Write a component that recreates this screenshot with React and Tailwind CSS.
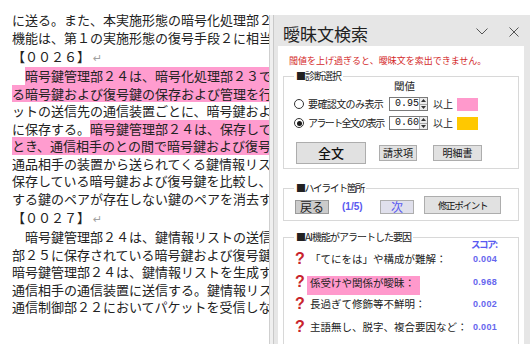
import React from "react";

const lines = [
  { t: "に送る。また、本実施形態の暗号化処理部２３の" },
  { t: "機能は、第１の実施形態の復号手段２に相当する" },
  { h: "【００２６】" },
  { pre: "　", hl: "暗号鍵管理部２４は、暗号化処理部２３であ" },
  { all: "る暗号鍵および復号鍵の保存および管理を行う" },
  { t: "ットの送信先の通信装置ごとに、暗号鍵および" },
  { pre: "に保存する。", hl: "暗号鍵管理部２４は、保存している" },
  { all: "とき、通信相手のとの間で暗号鍵および復号鍵" },
  { t: "通品相手の装置から送られてくる鍵情報リスト" },
  { t: "保存している暗号鍵および復号鍵を比較し、送" },
  { t: "する鍵のペアが存在しない鍵のペアを消去する" },
  { h: "【００２７】" },
  { t: "　暗号鍵管理部２４は、鍵情報リストの送信先" },
  { t: "部２５に保存されている暗号鍵および復号鍵の" },
  { t: "暗号鍵管理部２４は、鍵情報リストを生成する" },
  { t: "通信相手の通信装置に送信する。鍵情報リスト" },
  { t: "通信制御部２２においてパケットを受信しない" },
];

function DocLine({ l }) {
  if (l.h) {
    return (
      <div className="h-[21px] leading-[21px] whitespace-nowrap">
        {l.h}
        <span className="ml-[3px] text-[11px] text-[#a0a0a0] font-['DejaVu_Sans',sans-serif]">↵</span>
      </div>
    );
  }
  if (l.all) {
    return <div className="h-[17.5px] leading-[17.5px] whitespace-nowrap bg-[#ff9ccf]">{l.all}</div>;
  }
  if (l.hl) {
    return (
      <div className="h-[17.5px] leading-[17.5px] whitespace-nowrap">
        {l.pre}
        <span className="inline-block h-[17.5px] leading-[17.5px] bg-[#ff9ccf]">{l.hl}</span>
      </div>
    );
  }
  return <div className="h-[17.5px] leading-[17.5px] whitespace-nowrap">{l.t}</div>;
}

function Radio({ checked }) {
  return (
    <span className="w-[10px] h-[10px] rounded-full border border-[#333] bg-white flex items-center justify-center shrink-0">
      {checked && <span className="w-[5px] h-[5px] rounded-full bg-[#1a1a1a]" />}
    </span>
  );
}

function Spin({ v }) {
  return (
    <div className="w-[39px] h-[14px] border border-[#7a7a7a] bg-white flex items-stretch shrink-0">
      <span className="flex-1 text-[10px] leading-[12px] font-['Liberation_Mono',monospace] pl-[5px] text-[#111]">{v}</span>
      <span className="w-[9px] border-l border-[#a8a8a8] bg-[#ececec] flex flex-col">
        <span className="flex-1 flex items-center justify-center border-b border-[#a8a8a8]">
          <svg width="5" height="3" viewBox="0 0 5 3"><path d="M0 3L2.5 0L5 3Z" fill="#333" /></svg>
        </span>
        <span className="flex-1 flex items-center justify-center">
          <svg width="5" height="3" viewBox="0 0 5 3"><path d="M0 0L5 0L2.5 3Z" fill="#333" /></svg>
        </span>
      </span>
    </div>
  );
}

function Q() {
  return (
    <span className="w-[12px] shrink-0 font-['Liberation_Sans',sans-serif] font-bold text-[16px] leading-[16px] text-[#c8232c]">?</span>
  );
}

function Score({ v }) {
  return (
    <span className="font-['Liberation_Sans',sans-serif] font-bold text-[9px] leading-[10px] text-[#6666ee] tracking-[0.3px]">{v}</span>
  );
}

export default function App() {
  return (
    <div className="w-[530px] h-[364px] bg-white flex overflow-hidden font-['Noto_Sans_CJK_JP',sans-serif]">
      <div className="w-[269px] shrink-0 overflow-hidden pt-[11.25px] pl-[12px] text-[13px] text-[#222]">
        {lines.map((l, i) => (
          <DocLine key={i} l={l} />
        ))}
      </div>

      <div className="flex-1 flex flex-col">
        <div className="h-[15px] shrink-0" />
        <div className="h-[329px] shrink-0 flex border-l border-[#cfcfcf] bg-[#e6e6e6]">
          <div className="w-[3px] bg-[#efefef]" />
          <div className="w-px bg-[#c9c9c9]" />
          <div className="flex-1 flex flex-col">
            <div className="h-[31px] shrink-0 flex items-start pl-[9px] pr-[11px]">
              <span className="pt-[9px] text-[17px] leading-[20px] text-[#222]">曖昧文検索</span>
              <svg className="ml-auto mt-[13px]" width="12" height="7" viewBox="0 0 12 7">
                <path d="M0.5 0.5L6 6L11.5 0.5" fill="none" stroke="#555" strokeWidth="1" />
              </svg>
              <svg className="ml-[21px] mt-[12px]" width="10" height="10" viewBox="0 0 10 10">
                <path d="M0.5 0.5L9.5 9.5M9.5 0.5L0.5 9.5" fill="none" stroke="#555" strokeWidth="1" />
              </svg>
            </div>

            <div className="relative flex-1 bg-white ml-[4px] mr-[6px] px-[5px] pt-[9px] overflow-hidden text-[#222]">
              <div className="pl-[6px] text-[9px] leading-[12px] text-[#d42a2a] whitespace-nowrap">
                閾値を上げ過ぎると、曖昧文を索出できません。
              </div>

              <fieldset className="mt-[3px] border border-[#d8d8d8] pb-[4px]">
                <legend className="ml-[10px] px-[2px] text-[10px] leading-[12px] tracking-[-1px] whitespace-nowrap">■診断選択</legend>
                <div className="-mt-[1px] h-[10px] leading-[10px] text-[10.5px] pl-[110px]">閾値</div>
                <div className="mt-[6px] h-[14px] flex items-center pl-[10px]">
                  <Radio />
                  <span className="ml-[4px] w-[81px] text-[10px] leading-[14px] whitespace-nowrap tracking-[-0.6px]">要確認文のみ表示</span>
                  <Spin v="0.95" />
                  <span className="ml-[5px] w-[20px] text-[10px] leading-[14px]">以上</span>
                  <span className="ml-[4px] w-[21px] h-[13px] bg-[#ff99cc]" />
                </div>
                <div className="mt-[5px] h-[14px] flex items-center pl-[10px]">
                  <Radio checked />
                  <span className="ml-[4px] w-[81px] text-[10px] leading-[14px] whitespace-nowrap tracking-[-1.6px]">アラート全文の表示</span>
                  <Spin v="0.60" />
                  <span className="ml-[5px] w-[20px] text-[10px] leading-[14px]">以上</span>
                  <span className="ml-[4px] w-[21px] h-[13px] bg-[#ffc800]" />
                </div>
                <div className="mt-[12px] h-[22px] flex items-center pl-[12px]">
                  <button className="w-[70px] h-[22px] bg-[#e1e1e1] border border-[#adadad] text-[13px] leading-[20px] font-medium text-[#111]">全文</button>
                  <button className="ml-[13px] w-[38px] h-[16px] bg-[#e1e1e1] border border-[#adadad] text-[10px] leading-[14px] text-[#111]">請求項</button>
                  <button className="ml-[16px] w-[49px] h-[16px] bg-[#e1e1e1] border border-[#adadad] text-[10px] leading-[14px] text-[#111]">明細書</button>
                </div>
              </fieldset>

              <fieldset className="mt-[13px] border border-[#d8d8d8] pb-[6px]">
                <legend className="ml-[10px] px-[2px] text-[10px] leading-[12px] tracking-[-1.5px] whitespace-nowrap">■ハイライト箇所</legend>
                <div className="mt-[2px] h-[18px] flex items-end pl-[11px]">
                  <button className="w-[34px] h-[14px] bg-[#cbcbcb] border border-[#9a9a9a] text-[12px] leading-[12px] text-[#222]">戻る</button>
                  <span className="ml-[13px] w-[25px] h-[14px] text-[10px] leading-[14px] font-bold text-[#5a5af0] font-['Liberation_Sans',sans-serif] whitespace-nowrap">(1/5)</span>
                  <button className="ml-[13px] w-[34px] h-[14px] bg-[#e0e0ec] border border-[#adadad] text-[12px] leading-[12px] text-[#5a5af0]">次</button>
                  <button className="ml-[10px] w-[77px] h-[18px] bg-[#e1e1e1] border border-[#adadad] text-[9.5px] leading-[16px] text-[#111] tracking-[-1.3px]">修正ポイント</button>
                </div>
              </fieldset>

              <fieldset className="mt-[10px] border border-[#d8d8d8] pb-[10px]">
                <legend className="ml-[10px] px-[2px] text-[10px] leading-[12px] tracking-[-1px] whitespace-nowrap">■AI機能がアラートした要因</legend>
                <div className="mt-[5px] h-[22.5px] flex items-center pl-[11px]">
                  <Q />
                  <span className="w-[166px] pl-[3px] text-[10.5px] leading-[14px] whitespace-nowrap">「てにをは」や構成が難解：</span>
                  <Score v="0.004" />
                </div>
                <div className="h-[22.5px] flex items-center pl-[11px]">
                  <Q />
                  <div className="w-[166px] h-full">
                    <div className="mt-[5.5px] w-[113px] h-[19px] bg-[#ff99cc] pl-[3px] text-[10.5px] leading-[14px] whitespace-nowrap">係受けや関係が曖昧：</div>
                  </div>
                  <Score v="0.968" />
                </div>
                <div className="h-[22.5px] flex items-center pl-[11px]">
                  <Q />
                  <span className="w-[166px] pl-[3px] text-[10.5px] leading-[14px] whitespace-nowrap">長過ぎて修飾等不鮮明：</span>
                  <Score v="0.002" />
                </div>
                <div className="h-[22.5px] flex items-center pl-[11px]">
                  <Q />
                  <span className="w-[166px] pl-[3px] text-[10.5px] leading-[14px] whitespace-nowrap">主語無し、脱字、複合要因など：</span>
                  <Score v="0.001" />
                </div>
              </fieldset>

              <span className="absolute left-[192px] top-[193px] bg-white px-[1px] text-[9.5px] leading-[10px] font-bold text-[#5a5af0] tracking-[-1.5px] whitespace-nowrap">スコア:</span>
            </div>
          </div>
        </div>
      </div>
    </div>
  );
}
